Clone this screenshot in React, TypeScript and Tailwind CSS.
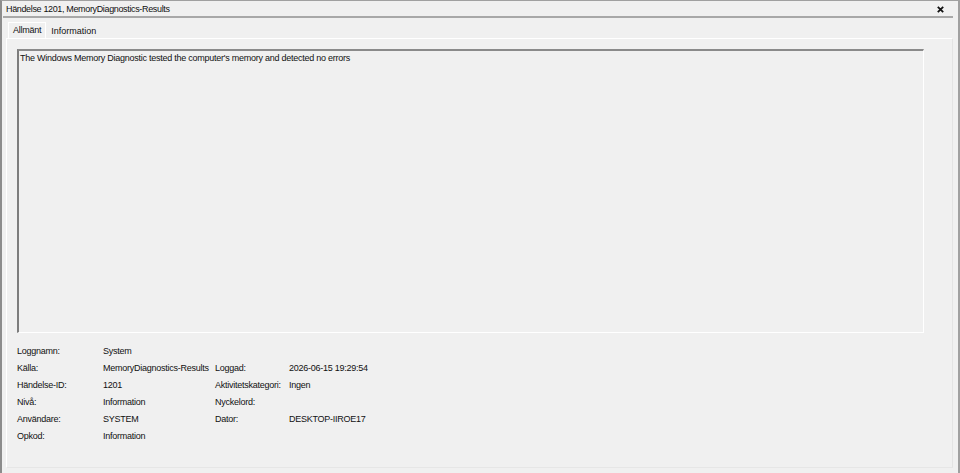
const rows: [string, string, string?, string?][] = [
  ['Loggnamn:', 'System'],
  ['Källa:', 'MemoryDiagnostics-Results', 'Loggad:', '2026-06-15 19:29:54'],
  ['Händelse-ID:', '1201', 'Aktivitetskategori:', 'Ingen'],
  ['Nivå:', 'Information', 'Nyckelord:', ''],
  ['Användare:', 'SYSTEM', 'Dator:', 'DESKTOP-IIROE17'],
  ['Opkod:', 'Information'],
]

export default function App() {
  return (
    <div
      className="flex h-[473px] w-[960px] flex-col overflow-hidden bg-[#f0f0f0] text-[9px] tracking-[-0.25px] text-[#111]"
      style={{ fontFamily: '"Liberation Sans", Arial, sans-serif' }}
    >
      <div className="flex h-full flex-col border-t border-l-2 border-r-2 border-t-[#a0a0a0] border-l-[#8c8c8c] border-r-[#a0a0a0] pt-px">
        {/* title bar */}
        <div className="mx-[1px] mr-[5px] flex h-[16px] items-center justify-between border-b-2 border-[#a8a8a8] pl-[3px] pr-[9px]">
          <span className="leading-none tracking-[-0.35px]">Händelse 1201, MemoryDiagnostics-Results</span>
          <svg width="7" height="7" viewBox="0 0 7 7" className="mt-px">
            <path d="M0.8 0.8 L6.2 6.2 M6.2 0.8 L0.8 6.2" stroke="#111" strokeWidth="1.8" />
          </svg>
        </div>

        {/* tabs */}
        <div className="ml-[6px] mt-[4px] flex h-[16px] items-end">
          <div className="flex h-[16px] items-center border-l border-t border-r border-white pl-[4px] pr-[4px]">
            Allmänt
          </div>
          <div className="flex h-[14px] items-center pl-[5px] pr-[3px] pt-[1px] tracking-[0px]">Information</div>
        </div>

        {/* tab panel */}
        <div className="mb-[5px] ml-[4px] mr-[5px] flex flex-1 flex-col border border-white border-r-[#e3e3e3] border-b-[#e6e6e6] pl-[10px] pr-[28px] pt-[10px]">
          <div className="h-[284px] border-l-2 border-t-2 border-r border-b border-l-[#7d7d7d] border-t-[#8a8a8a] border-r-white border-b-white px-[1px] pt-[1px]">
            <div className="leading-[12px]">
              The Windows Memory Diagnostic tested the computer's memory and detected no errors
            </div>
          </div>

          <div className="mt-[10px] grid grid-cols-[86px_112px_74px_1fr]">
            {rows.map((r, i) => (
              <div key={i} className="contents">
                <div className="h-[17px] leading-[17px]">{r[0]}</div>
                <div className="h-[17px] whitespace-nowrap leading-[17px]">{r[1]}</div>
                <div className="h-[17px] whitespace-nowrap leading-[17px]">{r[2] ?? ''}</div>
                <div className="h-[17px] whitespace-nowrap leading-[17px]">{r[3] ?? ''}</div>
              </div>
            ))}
          </div>
        </div>
      </div>
    </div>
  )
}
